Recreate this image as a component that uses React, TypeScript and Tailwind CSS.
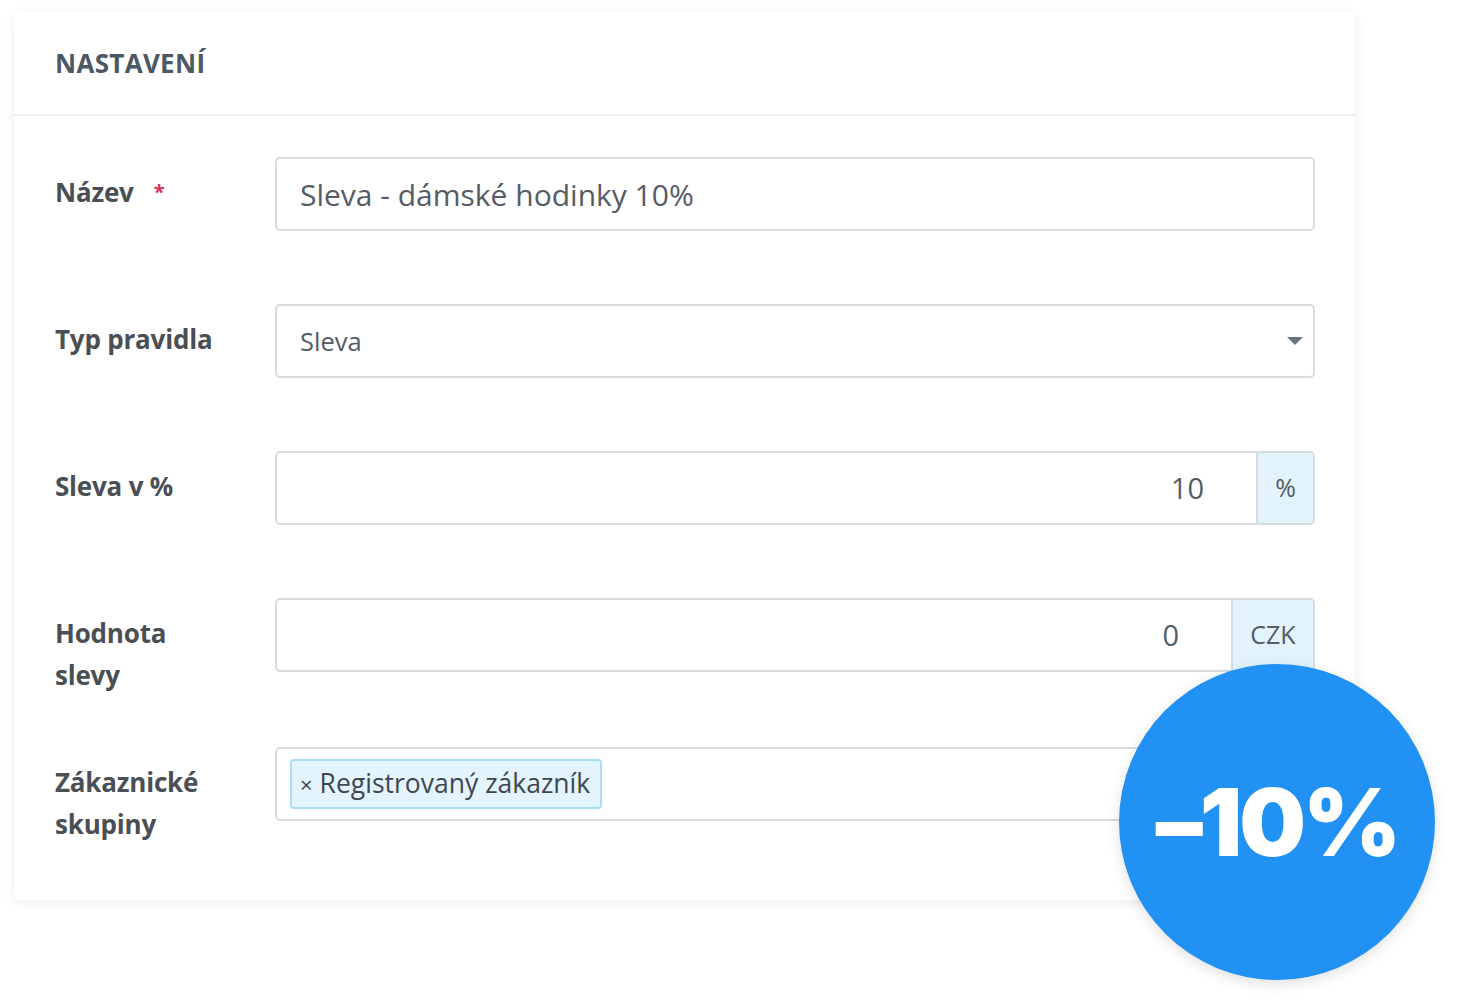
import React from "react";

const labelCls = "w-[220px] shrink-0 text-[26px] font-bold leading-[42px] text-[#4a4f55] pt-[14px] tracking-[-0.2px]";

function Row({ label, required, children, className = "" }: { label: React.ReactNode; required?: boolean; children: React.ReactNode; className?: string }) {
  return (
    <div className={"flex items-start h-[74px] " + className}>
      <div className={labelCls}>
        {label}
        {required && <span className="ml-[20px] text-[#e0315a] text-[20px] align-top">*</span>}
      </div>
      <div className="flex-1">{children}</div>
    </div>
  );
}

export default function App() {
  return (
    <div className="relative w-[1458px] h-[1006px] bg-white" style={{ fontFamily: '"Open Sans", "Noto Sans", sans-serif' }}>
      <div className="absolute left-[14px] top-[12px] w-[1341px] h-[888px] bg-white rounded-[4px] shadow-[0_2px_12px_rgba(0,0,0,0.08)]">
        <div className="h-[104px] border-b-2 border-[#e9eef2] px-[41px] flex items-center">
          <h2 className="text-[26px] font-bold text-[#4b5866] tracking-[0.3px]">NASTAVENÍ</h2>
        </div>
        <div className="pl-[41px] pr-[40px] pt-[41px] flex flex-col gap-[73px]">
          <Row label="Název" required>
            <div className="h-[74px] border-2 border-[#d8dbe0] rounded-[5px] flex items-center px-[23px] text-[30px] text-[#555c66]">
              Sleva - dámské hodinky 10%
            </div>
          </Row>
          <Row label="Typ pravidla">
            <div className="h-[74px] border-2 border-[#d8dbe0] rounded-[5px] flex items-center justify-between pl-[23px] pr-[10px] text-[25.5px] text-[#555c66]">
              <span>Sleva</span>
              <svg width="16" height="8" viewBox="0 0 16 8"><path d="M0 0 L16 0 L8 8 Z" fill="#6b7280" /></svg>
            </div>
          </Row>
          <Row label="Sleva v %">
            <div className="h-[74px] border-2 border-[#d8dbe0] rounded-[5px] flex overflow-hidden">
              <div className="flex-1 flex items-center justify-end pr-[52px] text-[29px] text-[#555c66]">10</div>
              <div className="w-[57px] border-l-2 border-[#d8dbe0] bg-[#e2f3fc] flex items-center justify-center text-[25px] text-[#555c66]">%</div>
            </div>
          </Row>
          <Row label={<>Hodnota<br />slevy</>}>
            <div className="h-[74px] border-2 border-[#d8dbe0] rounded-[5px] flex overflow-hidden">
              <div className="flex-1 flex items-center justify-end pr-[52px] text-[29px] text-[#555c66]">0</div>
              <div className="w-[82px] border-l-2 border-[#d8dbe0] bg-[#e2f3fc] flex items-center justify-center text-[25px] text-[#555c66]">CZK</div>
            </div>
          </Row>
          <Row label={<>Zákaznické<br />skupiny</>} className="mt-[2px]">
            <div className="h-[74px] border-2 border-[#d8dbe0] rounded-[5px] flex items-center pl-[13px]">
              <div className="h-[50px] pl-[8px] pr-[10px] flex items-center gap-[7px] bg-[#e3f4fd] border-2 border-[#a9dcf5] rounded-[4px] text-[26.5px] text-[#3f4650]">
                <span className="text-[22px]">×</span>
                <span>Registrovaný zákazník</span>
              </div>
            </div>
          </Row>
        </div>
      </div>
      <div className="absolute left-[1119px] top-[664px] w-[316px] h-[316px] rounded-full bg-[#2192f3] shadow-[0_4px_14px_rgba(0,0,0,0.12)] flex items-center justify-center">
        <span className="text-white text-[94px] font-black tracking-[-3px] leading-none" style={{ fontFamily: 'Inter, "Open Sans", sans-serif' }}>–10%</span>
      </div>
    </div>
  );
}
